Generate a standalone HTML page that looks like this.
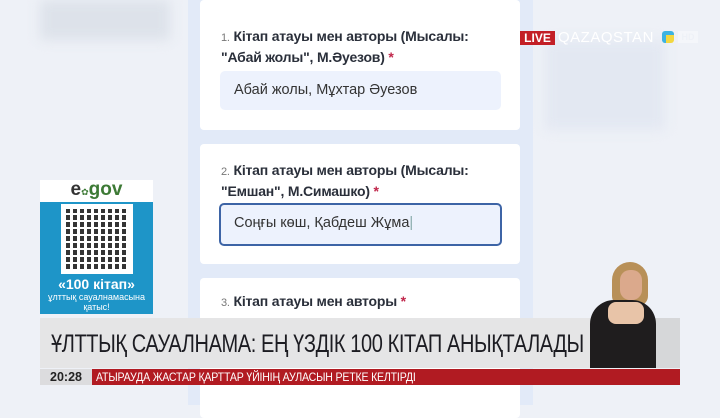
<!DOCTYPE html>
<html><head><meta charset="utf-8"><style>
*{margin:0;padding:0;box-sizing:border-box}
body{width:720px;height:405px;overflow:hidden;position:relative;background:#eef1f7;font-family:"Liberation Sans","DejaVu Sans",sans-serif}
.blur{position:absolute;background:#e6eaf2;filter:blur(6px)}
.col{position:absolute;left:188px;top:0;width:345px;height:405px;background:#e2eaf8}
.card{position:absolute;left:200px;width:320px;background:#fff;border-radius:4px}
.q{position:absolute;left:21px;font-size:14px;font-weight:bold;color:#2a2f3a;line-height:19px;letter-spacing:-.2px}
.q .n{font-weight:normal;font-size:11px;color:#777}
.q .s{color:#c0264a}
.inp{position:absolute;left:20px;width:281px;height:40px;background:#edf2fd;border-radius:5px;font-size:14.5px;color:#333;padding:11px 0 0 14px}
</style></head><body>
<div class="blur" style="left:40px;top:0;width:130px;height:40px;background:#dde2ea"></div>
<div class="blur" style="left:545px;top:40px;width:120px;height:90px;background:#e3e8f2"></div>
<div class="col"></div>
<div class="card" style="top:0;height:130px">
 <div class="q" style="top:27px"><span class="n">1.</span> Кітап атауы мен авторы (Мысалы:<br>"Абай жолы", М.Әуезов) <span class="s">*</span></div>
 <div class="inp" style="top:71px;height:39px">Абай жолы, Мұхтар Әуезов</div>
</div>
<div class="card" style="top:144px;height:120px">
 <div class="q" style="top:17px"><span class="n">2.</span> Кітап атауы мен авторы (Мысалы:<br>"Емшан", М.Симашко) <span class="s">*</span></div>
 <div class="inp" style="top:59px;left:19px;width:283px;height:43px;border:2px solid #3d64a6;padding:10px 0 0 13px">Соңғы көш, Қабдеш Жұма<span style="color:#8aa;font-weight:100">|</span></div>
</div>
<div class="card" style="top:278px;height:140px">
 <div class="q" style="top:14px"><span class="n">3.</span> Кітап атауы мен авторы <span class="s">*</span></div>
</div>
<!-- egov -->
<div style="position:absolute;left:40px;top:180px;width:113px;height:22px;background:#fff;text-align:center;font-weight:bold;font-size:19px;color:#3d7a35;line-height:20px"><span style="color:#333">e</span><span style="font-size:9px">✿</span>gov</div>
<div style="position:absolute;left:40px;top:202px;width:113px;height:112px;background:#1e95c8;color:#fff;text-align:center">
 <div style="margin:2px auto 0;width:72px;height:70px;background:#fff;padding:5px">
  <div style="width:62px;height:60px;background:repeating-linear-gradient(90deg,#111 0 4px,#fff 4px 7px),#111;opacity:.85;position:relative">
   <div style="position:absolute;inset:0;background:repeating-linear-gradient(0deg,transparent 0 5px,#fff 5px 7px)"></div>
  </div>
 </div>
 <div style="font-weight:bold;font-size:14px;margin-top:2px">«100 кітап»</div>
 <div style="font-size:9px;line-height:10px">ұлттық сауалнамасына<br>қатыс!</div>
</div>
<!-- logo -->
<div style="position:absolute;left:520px;top:31px;width:35px;height:14px;background:#c31f26;color:#fff;font-weight:bold;font-size:12px;line-height:14px;text-align:center">LIVE</div>
<div style="position:absolute;left:558px;top:29px;font-size:15px;color:#fff;letter-spacing:.5px;line-height:17px">QAZAQSTAN</div>
<div style="position:absolute;left:662px;top:31px;width:12px;height:12px;background:#f2d740;border-radius:3px;border-left:4px solid #3cb3e2;border-top:4px solid #3cb3e2"></div>
<div style="position:absolute;left:678px;top:31px;width:20px;height:12px;background:#f4f6fa;color:#eef1f7;font-size:9px;font-weight:bold;text-align:center;line-height:12px">HD</div>
<!-- signer -->
<div style="position:absolute;left:612px;top:262px;width:36px;height:44px;background:#b89058;border-radius:18px 18px 10px 10px"></div>
<div style="position:absolute;left:620px;top:270px;width:22px;height:30px;background:#dba98c;border-radius:10px"></div>
<!-- title bar -->
<div style="position:absolute;left:40px;top:318px;width:640px;height:50px;background:#e5e5e6"></div>
<div style="position:absolute;left:620px;top:318px;width:60px;height:50px;background:#d6d7d9"></div>
<div style="position:absolute;left:51px;top:330px;font-size:25px;color:#1c1c22;line-height:28px;letter-spacing:-.5px;transform:scaleX(.8);transform-origin:left;white-space:nowrap">ҰЛТТЫҚ САУАЛНАМА: ЕҢ ҮЗДІК 100 КІТАП АНЫҚТАЛАДЫ</div>
<div style="position:absolute;left:590px;top:300px;width:66px;height:68px;background:#1f1d1e;border-radius:24px 24px 0 0"></div>
<div style="position:absolute;left:608px;top:302px;width:36px;height:22px;background:#e8c4a8;border-radius:8px"></div>
<div style="position:absolute;left:40px;top:369px;width:52px;height:16px;background:#dcdcde;color:#222;font-weight:bold;font-size:12.5px;line-height:16px;text-align:center">20:28</div>
<div style="position:absolute;left:92px;top:369px;width:588px;height:16px;background:#b11b22"></div>
<div style="position:absolute;left:96px;top:369px;color:#fff;font-size:12px;line-height:16px;letter-spacing:-.2px;transform:scaleX(.88);transform-origin:left;white-space:nowrap">АТЫРАУДА ЖАСТАР ҚАРТТАР ҮЙІНІҢ АУЛАСЫН РЕТКЕ КЕЛТІРДІ</div>
</body></html>
